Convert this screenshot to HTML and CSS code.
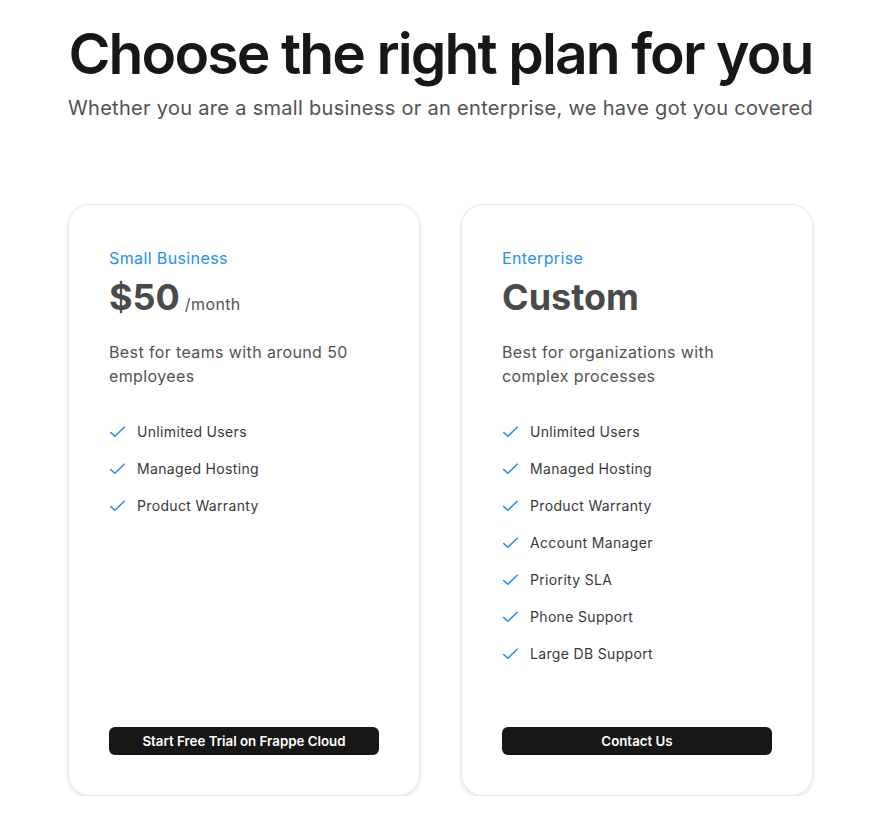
FILE: index.html
```html
<!DOCTYPE html>
<html lang="en">
<head>
    <meta charset="UTF-8">
    <meta name="viewport" content="width=device-width, initial-scale=1.0">
    <title>Pricing</title>
    <link rel="stylesheet" href="styles.css">
</head>
<body>
    <section class="pricing">
        <header class="pricing-head">
            <h1>Choose the right plan for you</h1>
            <p>Whether you are a small business or an enterprise, we have got you covered</p>
        </header>

        <div class="plans">
            <div class="plan">
                <div class="plan-top">
                    <div class="plan-name">Small Business</div>
                    <div class="plan-price">$50<span>/month</span></div>
                    <p class="plan-desc">Best for teams with around 50 employees</p>
                    <ul class="features">
                        <li><svg viewBox="0 0 16 16"><path d="M1.2 8.6l4.3 3.9 9.3-9"/></svg>Unlimited Users</li>
                        <li><svg viewBox="0 0 16 16"><path d="M1.2 8.6l4.3 3.9 9.3-9"/></svg>Managed Hosting</li>
                        <li><svg viewBox="0 0 16 16"><path d="M1.2 8.6l4.3 3.9 9.3-9"/></svg>Product Warranty</li>
                    </ul>
                </div>
                <a class="plan-btn" href="#">Start Free Trial on Frappe Cloud</a>
            </div>

            <div class="plan">
                <div class="plan-top">
                    <div class="plan-name">Enterprise</div>
                    <div class="plan-price">Custom</div>
                    <p class="plan-desc">Best for organizations with complex processes</p>
                    <ul class="features">
                        <li><svg viewBox="0 0 16 16"><path d="M1.2 8.6l4.3 3.9 9.3-9"/></svg>Unlimited Users</li>
                        <li><svg viewBox="0 0 16 16"><path d="M1.2 8.6l4.3 3.9 9.3-9"/></svg>Managed Hosting</li>
                        <li><svg viewBox="0 0 16 16"><path d="M1.2 8.6l4.3 3.9 9.3-9"/></svg>Product Warranty</li>
                        <li><svg viewBox="0 0 16 16"><path d="M1.2 8.6l4.3 3.9 9.3-9"/></svg>Account Manager</li>
                        <li><svg viewBox="0 0 16 16"><path d="M1.2 8.6l4.3 3.9 9.3-9"/></svg>Priority SLA</li>
                        <li><svg viewBox="0 0 16 16"><path d="M1.2 8.6l4.3 3.9 9.3-9"/></svg>Phone Support</li>
                        <li><svg viewBox="0 0 16 16"><path d="M1.2 8.6l4.3 3.9 9.3-9"/></svg>Large DB Support</li>
                    </ul>
                </div>
                <a class="plan-btn" href="#">Contact Us</a>
            </div>
        </div>
    </section>
</body>
</html>
```

FILE: styles.css
```css
/* Reset & Global Styles */
* {
    margin: 0;
    padding: 0;
    box-sizing: border-box;
}
body {
    font-family: 'Inter', 'Noto Sans', sans-serif;
    background: #fff;
    color: #171717;
    padding-right: 2px;
}
.pricing {
    width: 745px;
    margin: 0 auto;
    padding-top: 22px;
}
.pricing-head {
    text-align: center;
}
.pricing-head h1 {
    font-size: 57px;
    font-weight: 600;
    line-height: 64px;
    letter-spacing: -1.9px;
    white-space: nowrap;
    color: #171717;
}
.pricing-head p {
    margin-top: 8px;
    font-size: 20px;
    line-height: 28px;
    letter-spacing: 0.3px;
    color: #525252;
}
.plans {
    display: grid;
    grid-template-columns: 1fr 1fr;
    gap: 41px;
    margin-top: 82px;
}
.plan {
    display: flex;
    flex-direction: column;
    justify-content: space-between;
    height: 592px;
    padding: 41px 40px 40px;
    border: 1px solid #e8e8e8;
    border-radius: 22px;
    box-shadow: 0 2px 4px rgba(0, 0, 0, 0.12);
}
.plan-name {
    font-size: 16px;
    line-height: 24px;
    letter-spacing: 0.024em;
    color: #2490ef;
}
.plan-price {
    display: flex;
    align-items: baseline;
    gap: 5px;
    height: 44px;
    margin-top: 5px;
    font-size: 36px;
    font-weight: 700;
    line-height: 44px;
    color: #4a4a4a;
}
.plan-price span {
    font-size: 16px;
    font-weight: 400;
    letter-spacing: 0.024em;
    color: #525252;
}
.plan-desc {
    margin-top: 21px;
    font-size: 16px;
    line-height: 24px;
    letter-spacing: 0.024em;
    color: #525252;
    max-width: 260px;
}
.features {
    list-style: none;
    margin-top: 25px;
}
.features li {
    display: flex;
    align-items: center;
    gap: 11px;
    height: 37px;
    font-size: 14px;
    letter-spacing: 0.024em;
    color: #383838;
}
.features svg {
    width: 17px;
    height: 17px;
    fill: none;
    stroke: #2490ef;
    stroke-width: 1.4;
}
.plan-btn {
    display: block;
    height: 28px;
    line-height: 28px;
    text-align: center;
    background: #171717;
    color: #fff;
    border-radius: 6px;
    font-size: 13.3px;
    font-weight: 600;
    text-decoration: none;
}
```
